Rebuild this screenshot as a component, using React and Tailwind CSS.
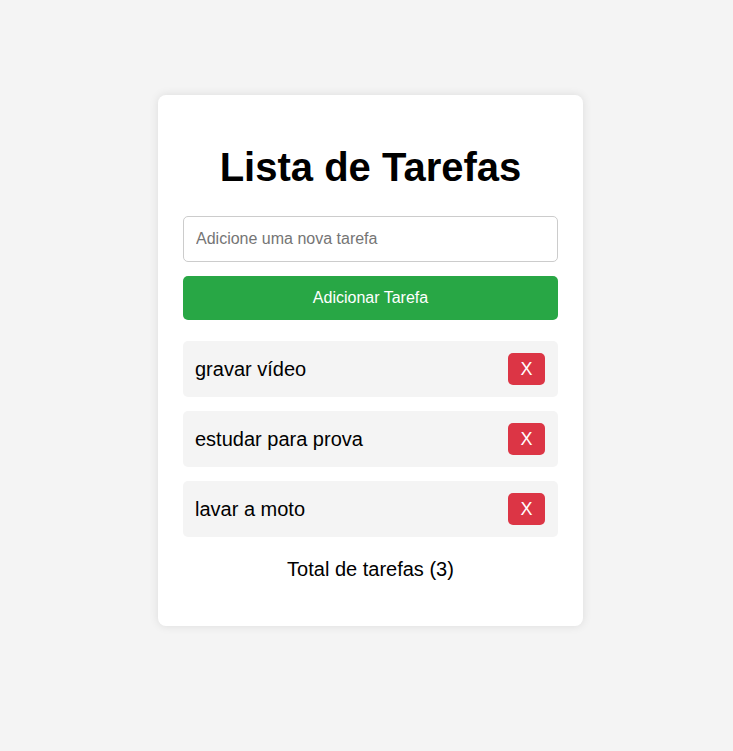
import React, { useState } from 'react';

const App = () => {
  const [tasks, setTasks] = useState(['gravar vídeo', 'estudar para prova', 'lavar a moto']);
  const [text, setText] = useState('');

  const add = () => {
    if (!text.trim()) return;
    setTasks([...tasks, text.trim()]);
    setText('');
  };

  return (
    <div className="min-h-[751px] bg-[#f4f4f4] pt-[95px] pl-[158px] font-['Liberation_Sans',Arial,sans-serif] text-black">
      <div className="w-[425px] bg-white rounded-lg shadow-[0_0_10px_rgba(0,0,0,0.1)] px-[25px] pt-[25px] pb-[25px]">
        <h1 className="mt-[24px] mb-[26px] text-center text-[40px] leading-[46px] font-bold">Lista de Tarefas</h1>

        <input
          value={text}
          onChange={e => setText(e.target.value)}
          placeholder="Adicione uma nova tarefa"
          className="block w-full h-[46px] px-3 text-base border border-[#ccc] rounded-[5px] outline-none placeholder:text-[#757575]"
        />
        <button
          onClick={add}
          className="block w-full h-[44px] mt-[14px] bg-[#28a745] text-white text-base rounded-[5px]"
        >
          Adicionar Tarefa
        </button>

        <ul className="mt-[21px] flex flex-col gap-[14px]">
          {tasks.map((t, i) => (
            <li key={i} className="h-[56px] flex items-center justify-between pl-3 pr-[13px] bg-[#f4f4f4] rounded-[5px]">
              <span className="text-[20px]">{t}</span>
              <button
                onClick={() => setTasks(tasks.filter((_, j) => j !== i))}
                className="w-[37px] h-[32px] bg-[#dc3545] text-white text-[18px] rounded-[5px] flex items-center justify-center"
              >
                X
              </button>
            </li>
          ))}
        </ul>

        <p className="mt-[21px] mb-[20px] text-center text-[20px] leading-[23px]">Total de tarefas ({tasks.length})</p>
      </div>
    </div>
  );
};

export default App;
